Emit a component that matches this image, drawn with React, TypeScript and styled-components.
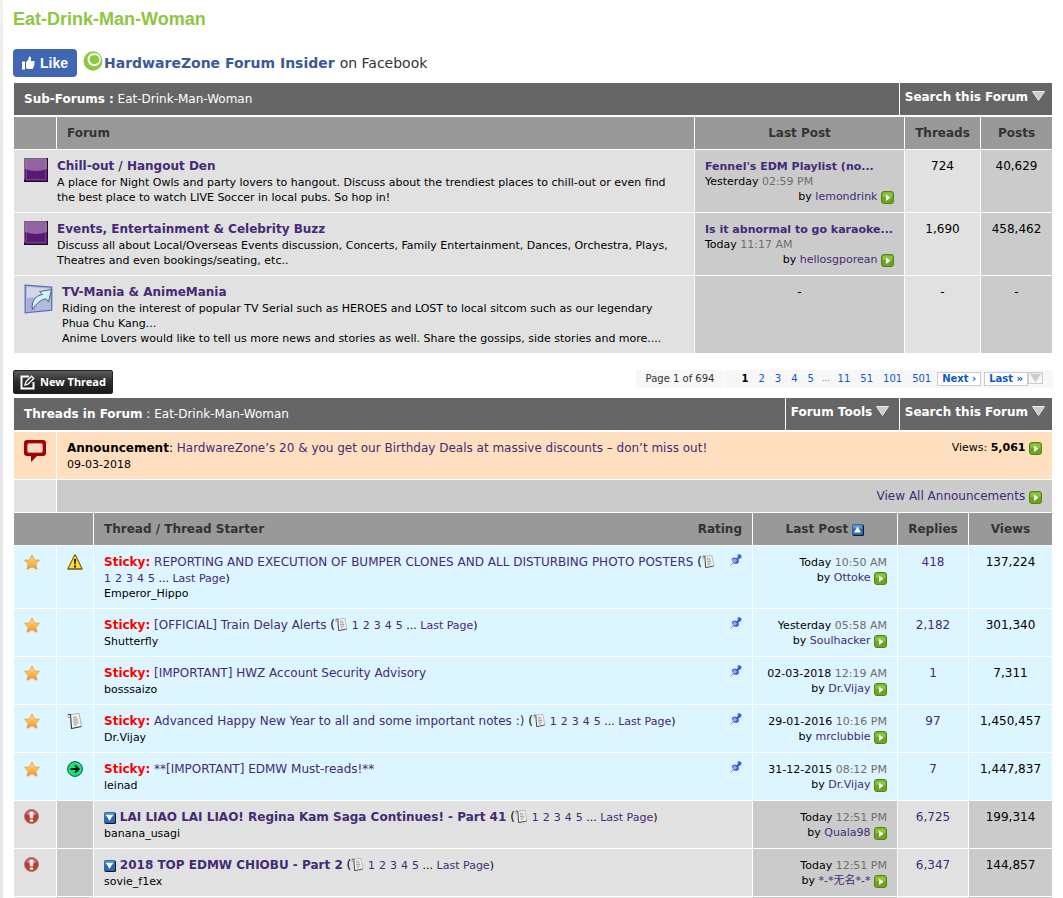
import React from "react";
import styled, { createGlobalStyle } from "styled-components";

const Global = createGlobalStyle`
  * { box-sizing: border-box; }
  body {
    margin: 0;
    background: #fff linear-gradient(#f0f0f0, #e6e6e6 200px) no-repeat 0 0 / 3px 100%;
    font-family: Verdana, "DejaVu Sans", "Noto Sans CJK SC", sans-serif;
    font-size: 12px;
    line-height: 16px;
    color: #000;
  }
  svg { flex: none; }
`;

const Page = styled.main`
  padding: 8px 10px 0 13px;
`;
const Title = styled.h1`
  margin: 0;
  font: bold 18px/22px Arial, "Liberation Sans", sans-serif;
  color: #8dc63f;
`;
const Social = styled.div`
  display: flex;
  align-items: center;
  height: 28px;
  margin: 19px 0 6px;
  font-size: 14px;
  color: #333;
`;
const LikeButton = styled.button`
  display: flex;
  align-items: center;
  gap: 5px;
  height: 28px;
  padding: 0 9px 0 8px;
  margin-right: 6px;
  border: 0;
  border-radius: 4px;
  background: #4267b2;
  color: #fff;
  font: bold 14px/16px Helvetica, "Liberation Sans", sans-serif;
`;
const FacebookLink = styled.a`
  margin-right: 5px;
  color: #3b5998;
  font-weight: bold;
  text-decoration: none;
`;
const LogoBox = styled.span`
  align-self: flex-start;
  margin-top: 2px;
  line-height: 0;
`;
const Link = styled.a`
  color: #442a77;
  text-decoration: none;
`;
const BoldLink = styled(Link)`
  font-weight: bold;
`;

const Bar = styled.div`
  display: flex;
  gap: 1px;
  margin: 0 1px 1px;
  color: #fff;
`;
const BarTitle = styled.h2`
  flex: 1;
  margin: 0;
  padding: 8px 10px;
  background: #666;
  font-size: 12px;
  line-height: 16px;
  font-weight: normal;
`;
const BarButton = styled.button`
  display: flex;
  gap: 4px;
  height: 32px;
  min-width: 113px;
  padding: 6px 7px 0 5px;
  border: 0;
  background: #666;
  color: #fff;
  font: inherit;
  font-weight: bold;
  svg { margin-top: 2px; }
`;

const Grid = styled.table`
  width: 100%;
  table-layout: fixed;
  border-collapse: separate;
  border-spacing: 1px;
`;
const Col = styled.col<{ $w?: number }>`
  width: ${(p) => (p.$w ? `${p.$w}px` : "auto")};
`;
type Tone = "light" | "dark" | "sticky" | "notice";
const tones: Record<Tone, string> = {
  light: "#e1e1e1",
  dark: "#cbcbcb",
  sticky: "#dcf5ff",
  notice: "#ffdfbf",
};
const Head = styled.th<{ $align?: string }>`
  height: 32px;
  padding: 8px 10px;
  background: #999;
  color: #333;
  text-align: ${(p) => p.$align ?? "center"};
  white-space: nowrap;
`;
const Cell = styled.td<{ $tone: Tone; $align?: string }>`
  padding: 8px 10px 7px;
  background: ${(p) => tones[p.$tone]};
  text-align: ${(p) => p.$align ?? "left"};
  vertical-align: top;
`;
const PostCell = styled(Cell)`
  padding: 9px 10px 6px;
`;
const CountCell = styled(Cell)`
  padding: 8px 0;
  text-align: center;
`;
const LinkCell = styled(Cell)`
  padding: 8px 10px;
`;
const TailCell = styled(Cell)`
  height: 1px;
  padding: 0;
`;
const IconCell = styled(Cell)`
  line-height: 0;
`;
const HeadSplit = styled.div`
  display: flex;
  justify-content: space-between;
`;
const Entry = styled.div`
  display: flex;
  gap: 9px;
`;
const Small = styled.div<{ $align?: string }>`
  font-size: 11px;
  line-height: 15px;
  text-align: ${(p) => p.$align ?? "left"};
  white-space: ${(p) => (p.$align === "right" ? "nowrap" : "normal")};
`;
const Details = styled.div`
  margin-top: 1px;
`;
const Clock = styled.span`
  color: #6e6e6e;
`;
const TitleLine = styled.div`
  display: flex;
  justify-content: space-between;
  height: 16px;
`;
const Sticky = styled.strong`
  color: #f00;
`;
const Pages = styled.span`
  font-size: 11px;
  line-height: 15px;
  a + a { margin-left: 4px; }
`;
const Inline = styled.span<{ $drop?: number }>`
  display: inline-block;
  margin: -4px 0;
  line-height: 0;
  vertical-align: -${(p) => p.$drop ?? 2}px;
`;

const Tools = styled.div`
  display: flex;
  justify-content: space-between;
  align-items: flex-start;
  margin: 16px 0 4px;
`;
const NewThread = styled.button`
  display: flex;
  align-items: center;
  gap: 5px;
  height: 24px;
  padding: 0 6px;
  border: 1px solid #222;
  border-radius: 2px;
  background: linear-gradient(#5b5b5b, #2b2b2b 50%, #1b1b1b);
  color: #fff;
  font: bold 11px/16px "Noto Sans", sans-serif;
`;
const Pager = styled.nav`
  display: flex;
  gap: 1px;
  height: 18px;
  font-size: 10px;
  line-height: 18px;
`;
const PagerLabel = styled.span`
  padding: 0 10px;
  background: #f7f7f7;
  color: #333;
`;
const PagerList = styled.div`
  display: flex;
  align-items: center;
  gap: 10px;
  padding: 0 10px 0 16px;
  background: #f7f7f7;
`;
const Dots = styled.span`
  margin: 0 -2px;
  color: #777;
  font-size: 8px;
`;
const PageLink = styled.a`
  color: #0a5bc4;
  text-decoration: none;
`;
const PagerEnd = styled.div`
  display: flex;
  align-items: flex-start;
  gap: 3px;
  margin-left: -4px;
`;
const PageBox = styled(PageLink)`
  height: 14px;
  padding: 0 4px;
  border: 1px solid #ccc;
  background: #fff;
  font-weight: bold;
  line-height: 12px;
`;
const LastGroup = styled.div`
  display: flex;
  align-items: flex-start;
`;
const Jump = styled.button`
  width: 15px;
  height: 12px;
  padding: 0;
  border: 1px solid #ccc;
  background: #f7f7f7;
  line-height: 0;
`;

const Triangle = () => (
  <svg width="13" height="10" viewBox="0 0 13 10" aria-hidden="true">
    <path d="M.5 .5h12L6.5 9.5z" fill="#ccc" stroke="#e8e8e8" />
  </svg>
);
const Go = () => (
  <svg width="13" height="13" viewBox="0 0 13 13" aria-hidden="true">
    <rect x=".5" y=".5" width="12" height="12" rx="2.5" fill="#6ba524" stroke="#55840e" />
    <path d="M1.500 6V3Q1.500 1.500 3 1.500h7q1.500 0 1.500 1.500v3z" fill="#8cc43a" />
    <path d="M5 3.500v6.500L9.500 6.700z" fill="#fff" />
  </svg>
);
const Thumb = () => (
  <svg width="14" height="14" viewBox="0 0 14 14" fill="#fff" aria-hidden="true">
    <path d="M1 5.500h3v8H1zM5 6c2-1.200 2.700-2.500 2.800-5 .8-1 2.300-.2 2.300 1.500 0 1-.3 1.800-.6 2.500h3c1.400 0 1.600 1.600.6 2.200.8.7.5 1.800-.3 2.100.5.800.1 1.700-.7 1.900.3 1-.2 1.800-1.200 1.800H8c-1.300 0-2-.5-3-.8z" />
  </svg>
);
const Logo = () => (
  <svg width="21" height="20" viewBox="0 0 21 20" aria-hidden="true">
    <ellipse cx="10" cy="10" rx="9.500" ry="9.700" fill="#8dc63f" />
    <circle cx="11.200" cy="8.600" r="6.700" fill="#fff" />
    <circle cx="11.500" cy="8.300" r="4.900" fill="#8dc63f" />
    <circle cx="12" cy="8" r="4.300" fill="#8dc63f" stroke="#fff" strokeWidth=".8" strokeDasharray="9 30" strokeDashoffset="-17" />
  </svg>
);
const Purple = () => (
  <svg width="24" height="24" viewBox="0 0 24 24" aria-hidden="true">
    <path d="M0 0h24v24H0z" fill="#1d0c26" />
    <path d="M0 0h23L0 22z" fill="#73677a" />
    <path d="M1 1h22v22H1z" fill="#581a73" />
    <path d="M1 1h22v10Q12 15 1 11z" fill="#9264a3" />
    <path d="M2.500 2v19.500h19V2" fill="none" stroke="#a679b5" strokeOpacity=".4" />
  </svg>
);
const Redirect = () => (
  <svg width="29" height="30" viewBox="0 0 29 30" aria-hidden="true">
    <path d="M1.200 1.200l26.500 2v23L1.200 28.800z" fill="#b4b9dd" stroke="#5673bd" strokeWidth="1.300" />
    <path d="M3 3l23 1.800v8L3 14z" fill="#d7d5ea" />
    <path d="M3 14l10-.5V26L3 27z" fill="#a9acd6" />
    <path d="M8.500 25.500C7 17.500 11.500 11.500 18.500 10.500L15.500 7.500 27.500 5.500 24.500 18 22 14.800C16 16 12.500 19.500 8.500 25.500z" fill="#d2f1fb" stroke="#4a657c" strokeLinejoin="round" />
  </svg>
);
const Compose = () => (
  <svg width="15" height="15" viewBox="0 0 15 15" fill="none" stroke="#fff" aria-hidden="true">
    <path d="M9 1.500H1.500v12h12V7" strokeWidth="2" />
    <path d="M5 10l.8-3L11.500 1.200l2.200 2.200L8 9.200z" strokeWidth="1.300" />
  </svg>
);
const Speech = () => (
  <svg width="23" height="23" viewBox="0 0 23 23" aria-hidden="true">
    <path d="M3 0h16q3 0 3 3v10q0 3-3 3h-6l-6 6v-6H3q-3 0-3-3V3q0-3 3-3" fill="#a40000" />
    <rect x="3.500" y="3.500" width="15" height="9" rx="1.500" fill="#fadcc5" stroke="#d98f83" />
  </svg>
);
const Star = () => (
  <svg width="16" height="16" viewBox="0 0 16 16" aria-hidden="true">
    <defs>
      <linearGradient id="gold" x2="0" y2="1">
        <stop offset="0" stopColor="#ffe58a" />
        <stop offset="1" stopColor="#ff9410" />
      </linearGradient>
    </defs>
    <path d="M8 .9l2.300 5 5.200.4-3.800 3.600 1.300 5.400L8 12.800l-5 2.500 1.300-5.400L.5 6.300l5.200-.4z" fill="url(#gold)" stroke="#d99a4a" strokeWidth=".8" strokeLinejoin="round" />
  </svg>
);
const Warning = () => (
  <svg width="16" height="16" viewBox="0 0 16 16" aria-hidden="true">
    <path d="M8 1.200L14.800 14.800H1.200z" fill="#ffdc35" stroke="#6d5a08" strokeWidth="1.800" strokeLinejoin="round" />
    <path d="M8 1.500L14.300 14.300H1.700z" fill="#ffdc35" />
    <path d="M7 5h2l-.4 5.500H7.400zM7 11.500h2v2H7z" fill="#111" />
  </svg>
);
const NotePage = ({ size = 16 }: { size?: number }) => (
  <svg width={size} height={size} viewBox="0 0 16 16" aria-hidden="true">
    <path d="M3 1.500L12.500.5 14.500 13 5 15.500z" fill="#f8f8f8" />
    <path d="M1 1.500h2.500L4.500 15.500 14.500 13.500" fill="none" stroke="#333" strokeWidth="1.100" />
    <path d="M1 1.500v3h2.500M3.500 1.500L12 .5l2.500 12.500" fill="none" stroke="#999" strokeWidth=".8" />
    <path d="M6 4h4M6 6h5M6.300 8h5M6.500 10h5M7 12h3" stroke="#777" strokeWidth=".8" />
  </svg>
);
const Arrow = () => (
  <svg width="16" height="16" viewBox="0 0 16 16" aria-hidden="true">
    <circle cx="8" cy="8" r="7.400" fill="#14e27f" stroke="#17573a" />
    <path d="M3.500 8h8M8 4.300L11.700 8 8 11.700" fill="none" stroke="#05140c" strokeWidth="1.900" />
  </svg>
);
const Alert = () => (
  <svg width="16" height="16" viewBox="0 0 16 16" aria-hidden="true">
    <circle cx="7.500" cy="7.500" r="7" fill="#c03a30" stroke="#a8807e" />
    <path d="M2.500 5a5.500 5.500 0 0 1 10 0Q7.500 8 2.500 5" fill="#dd8078" />
    <rect x="5.700" y="2.700" width="3.600" height="6.600" rx="1" fill="#fff8ee" />
    <rect x="5.700" y="10.200" width="3.600" height="2.600" rx="1" fill="#fbe3d4" />
  </svg>
);
const Pin = () => (
  <svg width="12" height="12" viewBox="0 0 12 12" aria-hidden="true">
    <path d="M.5 11.500L3 9" stroke="#999" />
    <path d="M1.500 5l2.500-1.500 3 .5.800-1.500L7.500 1l1.500-1 2.500 1.500v2L10 4.500 8.500 5.500 9 8.500 6.500 10 3.500 9.500z" fill="#4160d8" />
    <ellipse cx="4.500" cy="6.700" rx="2.200" ry="1.900" fill="#8ba6f2" />
  </svg>
);
const Square = ({ up }: { up?: boolean }) => (
  <svg width="12" height="12" viewBox="0 0 12 12" aria-hidden="true">
    <rect x=".5" y=".5" width="11.500" height="11.500" rx="1.500" fill="#0b1a30" />
    <rect width="11" height="11" rx="1.500" fill="#2b69aa" />
    <path d="M1 1h9v3.500H1z" fill="#5d97cc" />
    <path d={up ? "M5.500 2.500L9 8.500H2z" : "M2 3h7L5.500 9z"} fill="#fff" />
  </svg>
);

type Forum = { name: string; lines: string[]; redirect?: boolean; last?: [string, string, string, string]; threads: string; posts: string };
const forums: Forum[] = [
  {
    name: "Chill-out / Hangout Den",
    lines: ["A place for Night Owls and party lovers to hangout. Discuss about the trendiest places to chill-out or even find", "the best place to watch LIVE Soccer in local pubs. So hop in!"],
    last: ["Fennel's EDM Playlist (no...", "Yesterday", "02:59 PM", "lemondrink"],
    threads: "724",
    posts: "40,629",
  },
  {
    name: "Events, Entertainment & Celebrity Buzz",
    lines: ["Discuss all about Local/Overseas Events discussion, Concerts, Family Entertainment, Dances, Orchestra, Plays,", "Theatres and even bookings/seating, etc.."],
    last: ["Is it abnormal to go karaoke...", "Today", "11:17 AM", "hellosgporean"],
    threads: "1,690",
    posts: "458,462",
  },
  {
    name: "TV-Mania & AnimeMania",
    redirect: true,
    lines: ["Riding on the interest of popular TV Serial such as HEROES and LOST to local sitcom such as our legendary", "Phua Chu Kang...", "Anime Lovers would like to tell us more news and stories as well. Share the gossips, side stories and more...."],
    threads: "-",
    posts: "-",
  },
];

type Thread = { title: string; starter: string; sticky?: boolean; pages?: boolean; breakPages?: boolean; icon?: React.ReactNode; day: string; time: string; by: string; replies: string; views: string };
const threads: Thread[] = [
  { sticky: true, icon: <Warning />, title: "REPORTING AND EXECUTION OF BUMPER CLONES AND ALL DISTURBING PHOTO POSTERS", pages: true, breakPages: true, starter: "Emperor_Hippo", day: "Today", time: "10:50 AM", by: "Ottoke", replies: "418", views: "137,224" },
  { sticky: true, title: "[OFFICIAL] Train Delay Alerts", pages: true, starter: "Shutterfly", day: "Yesterday", time: "05:58 AM", by: "Soulhacker", replies: "2,182", views: "301,340" },
  { sticky: true, title: "[IMPORTANT] HWZ Account Security Advisory", starter: "bosssaizo", day: "02-03-2018", time: "12:19 AM", by: "Dr.Vijay", replies: "1", views: "7,311" },
  { sticky: true, icon: <NotePage />, title: "Advanced Happy New Year to all and some important notes :)", pages: true, starter: "Dr.Vijay", day: "29-01-2016", time: "10:16 PM", by: "mrclubbie", replies: "97", views: "1,450,457" },
  { sticky: true, icon: <Arrow />, title: "**[IMPORTANT] EDMW Must-reads!**", starter: "leinad", day: "31-12-2015", time: "08:12 PM", by: "Dr.Vijay", replies: "7", views: "1,447,837" },
  { title: "LAI LIAO LAI LIAO! Regina Kam Saga Continues! - Part 41", pages: true, starter: "banana_usagi", day: "Today", time: "12:51 PM", by: "Quala98", replies: "6,725", views: "199,314" },
  { title: "2018 TOP EDMW CHIOBU - Part 2", pages: true, starter: "sovie_f1ex", day: "Today", time: "12:51 PM", by: "*-*无名*-*", replies: "6,347", views: "144,857" },
];

const GoLink = () => (
  <Link href="#" aria-label="Go to last post">
    <Inline $drop={4}><Go /></Inline>
  </Link>
);

const PageNumbers = () => (
  <Pages>
    <span>{[1, 2, 3, 4, 5].map((n) => <Link key={n} href="#">{n}</Link>)}</span>
    {" ... "}
    <span><Link href="#">Last Page</Link>)</span>
  </Pages>
);

const ThreadRow = ({ t }: { t: Thread }) => {
  const a: Tone = t.sticky ? "sticky" : "light";
  const b: Tone = t.sticky ? "sticky" : "dark";
  return (
    <tr>
      <IconCell $tone={a}>{t.sticky ? <Star /> : <Alert />}</IconCell>
      <IconCell $tone={b}>{t.icon}</IconCell>
      <Cell $tone={a}>
        <TitleLine>
          <div>
            {t.sticky ? <><Sticky>Sticky:</Sticky> <Link href="#">{t.title}</Link></> : <><Inline $drop={3}><Square /></Inline> <BoldLink href="#">{t.title}</BoldLink></>}
            {t.pages && <> (<Inline><NotePage size={13} /></Inline></>}
            {t.pages && !t.breakPages && <> <PageNumbers /></>}
          </div>
          {t.sticky && <Pin />}
        </TitleLine>
        <Details>
          {t.breakPages && <Small><PageNumbers /></Small>}
          <Small>{t.starter}</Small>
        </Details>
      </Cell>
      <PostCell $tone={b}>
        <Small $align="right">{t.day} <Clock>{t.time}</Clock></Small>
        <Small $align="right">by <Link href="#">{t.by}</Link> <GoLink /></Small>
      </PostCell>
      <CountCell $tone={a}><Link href="#">{t.replies}</Link></CountCell>
      <CountCell $tone={b}>{t.views}</CountCell>
    </tr>
  );
};

export default function App() {
  return (
    <Page>
      <Global />
      <Title>Eat-Drink-Man-Woman</Title>
      <Social>
        <LikeButton><Thumb />Like</LikeButton>
        <LogoBox><Logo /></LogoBox>
        <FacebookLink href="#">HardwareZone Forum Insider</FacebookLink>
        on Facebook
      </Social>

      <Bar>
        <BarTitle><b>Sub-Forums :</b> Eat-Drink-Man-Woman</BarTitle>
        <BarButton>Search this Forum<Triangle /></BarButton>
      </Bar>
      <Grid>
        <colgroup><Col $w={42} /><Col /><Col $w={209} /><Col $w={75} /><Col $w={71} /></colgroup>
        <thead>
          <tr><Head /><Head $align="left">Forum</Head><Head>Last Post</Head><Head>Threads</Head><Head>Posts</Head></tr>
        </thead>
        <tbody>
          {forums.map((f) => (
            <tr key={f.name}>
              <Cell $tone="light" colSpan={2}>
                <Entry>
                  {f.redirect ? <Redirect /> : <Purple />}
                  <div>
                    <BoldLink href="#">{f.name}</BoldLink>
                    <Details>{f.lines.map((l) => <Small key={l}>{l}</Small>)}</Details>
                  </div>
                </Entry>
              </Cell>
              {f.last ? (
                <PostCell $tone="dark">
                  <Small><BoldLink href="#">{f.last[0]}</BoldLink></Small>
                  <Small>{f.last[1]} <Clock>{f.last[2]}</Clock></Small>
                  <Small $align="right">by <Link href="#">{f.last[3]}</Link> <GoLink /></Small>
                </PostCell>
              ) : (
                <CountCell $tone="dark">-</CountCell>
              )}
              <CountCell $tone="light">{f.threads}</CountCell>
              <CountCell $tone="dark">{f.posts}</CountCell>
            </tr>
          ))}
        </tbody>
      </Grid>

      <Tools>
        <NewThread><Compose />New Thread</NewThread>
        <Pager>
          <PagerLabel>Page 1 of 694</PagerLabel>
          <PagerList>
            <b>1</b>
            {["2", "3", "4", "5"].map((n) => <PageLink key={n} href="#">{n}</PageLink>)}
            <Dots>...</Dots>
            {["11", "51", "101", "501"].map((n) => <PageLink key={n} href="#">{n}</PageLink>)}
            <PagerEnd>
              <PageBox href="#">Next ›</PageBox>
              <LastGroup>
                <PageBox href="#">Last »</PageBox>
                <Jump aria-label="Jump to page"><Triangle /></Jump>
              </LastGroup>
            </PagerEnd>
          </PagerList>
        </Pager>
      </Tools>

      <Bar>
        <BarTitle><b>Threads in Forum</b> : Eat-Drink-Man-Woman</BarTitle>
        <BarButton>Forum Tools<Triangle /></BarButton>
        <BarButton>Search this Forum<Triangle /></BarButton>
      </Bar>
      <Grid>
        <colgroup><Col $w={42} /><Col $w={36} /><Col /><Col $w={144} /><Col $w={70} /><Col $w={83} /></colgroup>
        <tbody>
          <tr>
            <IconCell $tone="notice"><Speech /></IconCell>
            <Cell $tone="notice" colSpan={5}>
              <TitleLine>
                <div><b>Announcement</b>: <Link href="#">HardwareZone’s 20 &amp; you get our Birthday Deals at massive discounts – don’t miss out!</Link></div>
                <Small $align="right">Views: <b>5,061</b> <GoLink /></Small>
              </TitleLine>
              <Details><Small>09-03-2018</Small></Details>
            </Cell>
          </tr>
          <tr>
            <Cell $tone="light" />
            <LinkCell $tone="dark" colSpan={5} $align="right"><Link href="#">View All Announcements</Link> <GoLink /></LinkCell>
          </tr>
          <tr>
            <Head colSpan={2} />
            <Head><HeadSplit><span>Thread / Thread Starter</span><span>Rating</span></HeadSplit></Head>
            <Head>Last Post <Inline $drop={3}><Square up /></Inline></Head>
            <Head>Replies</Head>
            <Head>Views</Head>
          </tr>
          {threads.map((t) => <ThreadRow key={t.title} t={t} />)}
          <tr>
            <TailCell $tone="light" /><TailCell $tone="dark" /><TailCell $tone="light" /><TailCell $tone="dark" /><TailCell $tone="light" /><TailCell $tone="dark" />
          </tr>
        </tbody>
      </Grid>
    </Page>
  );
}
